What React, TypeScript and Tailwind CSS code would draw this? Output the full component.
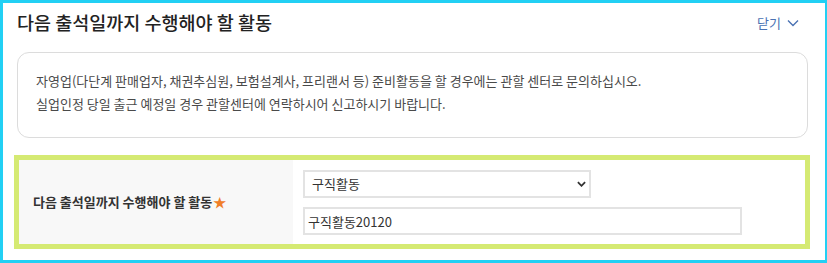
const FONT = "font-['Noto_Sans_CJK_KR','Noto_Sans',sans-serif]";

function ChevronDown({ className }: { className?: string }) {
  return (
    <svg viewBox="0 0 12 8" className={className} fill="none">
      <path d="M1 1.5l5 5 5-5" stroke="currentColor" strokeWidth="1.4" />
    </svg>
  );
}

export default function App() {
  return (
    <div
      className={`${FONT} w-[827px] h-[263px] bg-white border-[#22d0f4] border-t-[3px] border-l-[3px] border-r-2 border-b-[3px] flex flex-col`}
    >
      {/* Header */}
      <div className="h-[39px] flex items-center justify-between pl-[14px] pr-[26px]">
        <h2 className="text-[18.5px] font-medium text-[#222] mt-[1px]">
          다음 출석일까지 수행해야 할 활동
        </h2>
        <button
          type="button"
          className="flex items-center gap-[6px] text-[13px] text-[#4a72b3] mt-[1px]"
        >
          닫기
          <ChevronDown className="w-[12px] h-[8px]" />
        </button>
      </div>

      {/* Notice */}
      <div className="mt-[10px] ml-[14px] mr-[17px] h-[86px] rounded-[12px] border border-[#dcdcdc] pl-[18px] pt-[16px] text-[13px] text-[#4a4a4a] leading-[23px]">
        <p>
          자영업(다단계 판매업자, 채권추심원, 보험설계사, 프리랜서 등) 준비활동을
          할 경우에는 관할 센터로 문의하십시오.
        </p>
        <p>실업인정 당일 출근 예정일 경우 관할센터에 연락하시어 신고하시기 바랍니다.</p>
      </div>

      {/* Form row */}
      <div className="mt-[17px] ml-[11px] mr-[15px] h-[94px] border-[5px] border-[#d5ea73] flex">
        <div className="w-[274px] bg-[#f8f8f8] flex items-center pl-[14px] text-[13px] font-semibold text-[#333]">
          다음 출석일까지 수행해야 할 활동
          <span className="text-[#f07f2a] ml-[1px]">★</span>
        </div>
        <div className="flex-1 flex flex-col gap-[9px] pl-[10px] pt-[10px]">
          <div className="relative w-[288px] h-[28px]">
            <select
              className="appearance-none w-full h-full border-2 border-[#e3e3e3] bg-white pl-[7px] text-[13px] text-[#333] outline-none"
              defaultValue="구직활동"
            >
              <option>구직활동</option>
            </select>
            <svg
              viewBox="0 0 10 6"
              className="absolute right-[5px] top-[11px] w-[9px] h-[6px] text-[#333] pointer-events-none"
              fill="none"
            >
              <path d="M1 1l4 4 4-4" stroke="currentColor" strokeWidth="2" />
            </svg>
          </div>
          <input
            className="w-[439px] h-[28px] border-2 border-[#e3e3e3] bg-white px-[3px] text-[13px] text-[#333] outline-none"
            defaultValue="구직활동20120"
          />
        </div>
      </div>
    </div>
  );
}
